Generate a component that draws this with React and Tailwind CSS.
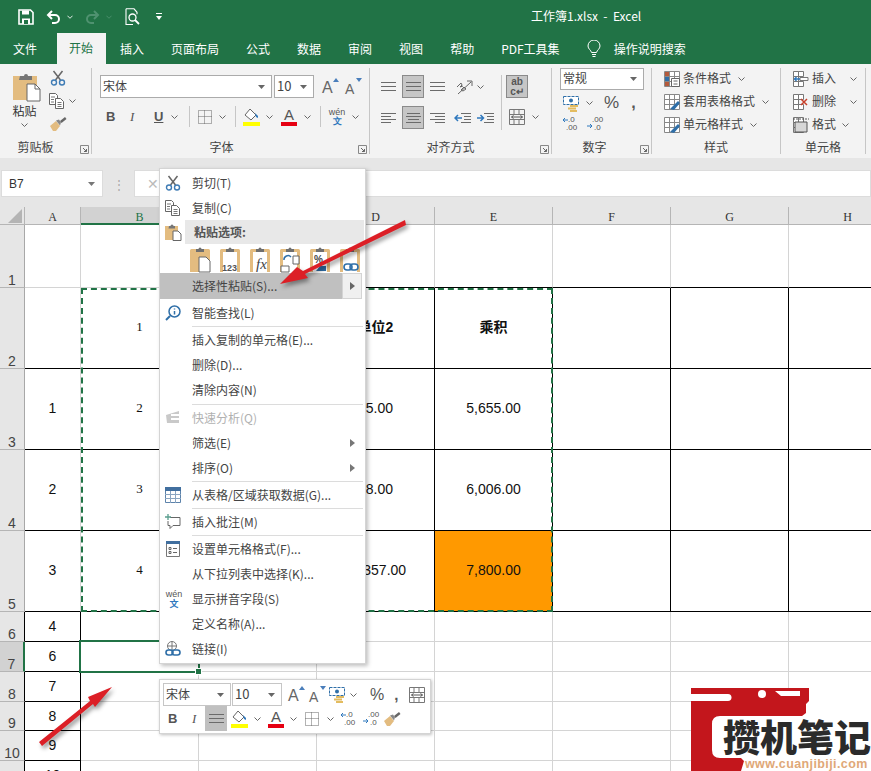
const UI = "font-['Noto_Sans_CJK_SC','Liberation_Sans',sans-serif]";

const Chev = ({ className = "" }) => (
  <svg width="7" height="4" viewBox="0 0 7 4" className={"shrink-0 " + className}>
    <path d="M.5.5l3 3 3-3" fill="none" stroke="#666" />
  </svg>
);

const Launcher = () => (
  <svg width="9" height="9" viewBox="0 0 9 9" className="absolute right-[2px] bottom-[0px]">
    <path d="M.5 8.500v-8h8v8z" fill="none" stroke="#888" />
    <path d="M3 3l3.500 3.500M6.500 4v2.500H4" fill="none" stroke="#666" />
  </svg>
);

const Save = () => (
  <svg width="16" height="16" viewBox="0 0 16 16">
    <path d="M1 1h11.500L15 3.500V15H1z" fill="none" stroke="#fff" strokeWidth="1.600" />
    <path d="M4 1.500h7v4H4zM4 9.500h8V15H4z" fill="#fff" />
    <path d="M6 11h4v4H6z" fill="#217346" />
  </svg>
);

const Undo = ({ color = "#fff" }) => (
  <svg width="15" height="14" viewBox="0 0 15 14">
    <path d="M2 5h7a4 4 0 0 1 0 8H6" fill="none" stroke={color} strokeWidth="2" />
    <path d="M6 1L2 5l4 4" fill="none" stroke={color} strokeWidth="2" />
  </svg>
);

const Preview = () => (
  <svg width="16" height="18" viewBox="0 0 16 18">
    <path d="M1 .8h8l3 3.500v2M1 .8V16.500h7" fill="none" stroke="#fff" strokeWidth="1.100" />
    <circle cx="7.500" cy="9.500" r="3.500" fill="none" stroke="#fff" strokeWidth="1.300" />
    <path d="M10 12l4 4" stroke="#fff" strokeWidth="1.800" />
  </svg>
);

const Bulb = () => (
  <svg width="14" height="19" viewBox="0 0 14 19">
    <path d="M4.500 12.500C4 10 1 9 1 6a6 6 0 0 1 12 0c0 3-3 4-3.500 6.500z" fill="none" stroke="#fff" />
    <path d="M5 14.500h4M5.500 16.500h3" stroke="#fff" />
  </svg>
);

const Clip = ({ w = 20, h = 26, solid = false, children }) => (
  <svg width={w} height={h} viewBox="0 0 20 26" className="overflow-visible">
    <path d="M1.500 3H18.500a1.500 1.500 0 0 1 1.500 1.500V26H0V4.500A1.500 1.500 0 0 1 1.500 3z" fill="#e3bc80" />
    {!solid && <path d="M3 6h14v20H3z" fill="#fff" />}
    <path d="M6 3h2.500a1.500 1.500 0 0 1 3 0H14v3H6z" fill="#6f6f6f" />
    {children}
  </svg>
);

const PasteBig = () => (
  <svg width="29" height="30" viewBox="0 0 29 30">
    <path d="M1 4h24v24H1z" fill="#e3bc80" />
    <path d="M8 4h4a2 2 0 0 1 4 0h4v4H7z" fill="#757575" />
    <path d="M15 12h8l5 5v12H15z" fill="#fff" stroke="#666" />
    <path d="M23 12v5h5" fill="none" stroke="#666" />
  </svg>
);

const PasteSmall = () => (
  <svg width="17" height="18" viewBox="0 0 17 18">
    <path d="M0 3h13v14H0z" fill="#e3bc80" />
    <path d="M4 3h1.500a1.500 1.500 0 0 1 3 0H10v2.500H3.500z" fill="#777" />
    <path d="M8 8h5l3 3v6.500H8z" fill="#fff" stroke="#666" />
  </svg>
);

const Scissors = () => (
  <svg width="16" height="16" viewBox="0 0 16 16">
    <path d="M3.500 1l7 9M12.500 1l-7 9" stroke="#666" strokeWidth="1.500" />
    <circle cx="4" cy="12.500" r="2.500" fill="none" stroke="#3f7cb5" strokeWidth="1.400" />
    <circle cx="12" cy="12.500" r="2.500" fill="none" stroke="#3f7cb5" strokeWidth="1.400" />
  </svg>
);

const Copy = () => (
  <svg width="16" height="16" viewBox="0 0 16 16">
    <path d="M.5.5h6l2 2v9h-8z" fill="#fff" stroke="#666" />
    <path d="M6.500 5.500h5l3 3v7h-8z" fill="#fff" stroke="#666" />
    <path d="M2 4h4M2 6.500h3M2 9h3M8.500 9.500h4M8.500 11.500h4M8.500 13.500h4" stroke="#777" />
  </svg>
);

const Painter = () => (
  <svg width="17" height="15" viewBox="0 0 17 15">
    <path d="M0 10l6-5 4 5-4 5H3z" fill="#e3bc80" />
    <path d="M6 4.500l3-1 2 3-1 3z" fill="#888" />
    <path d="M10 5l5-4 1.500 2-5 4z" fill="#666" />
  </svg>
);

const Lines = ({ kind = "c", w = 15 }) => {
  const rows = {
    t: [15, 15, 15],
    c: [15, 15, 15],
    l: [15, 10, 15, 10],
    m: [13, 15, 11, 15],
    r: [15, 10, 15, 10],
  }[kind];
  return (
    <svg width={w} height="12" viewBox="0 0 15 12">
      {rows.map((len, i) => {
        const x = kind === "r" ? 15 - len : kind === "m" ? (15 - len) / 2 : 0;
        const y = rows.length === 3 ? i * 4 + 1.5 : i * 3 + 1.5;
        return <path key={i} d={`M${x} ${y}h${len}`} stroke="#6b6b6b" />;
      })}
    </svg>
  );
};

const Orient = () => (
  <svg width="18" height="17" viewBox="0 0 18 17" className="overflow-visible">
    <path d="M3 16L16 4M12 3h5v5" fill="none" stroke="#666" />
    <path d="M2 9l4-4 1 2-2 2 3-1M6 12l3-3 2 2-3 2z" fill="none" stroke="#666" />
  </svg>
);

const Indent = ({ flip = false }) => (
  <svg width="17" height="12" viewBox="0 0 17 12">
    <path d="M7 1.500h10M10 4.500h7M10 7.500h7M7 10.500h10" stroke="#6b6b6b" />
    {flip ? <path d="M0 6h6M3.500 3L6.500 6l-3 3" fill="none" stroke="#2f78bd" strokeWidth="1.500" /> : <path d="M1 6h7M4 3L1 6l3 3" fill="none" stroke="#2f78bd" strokeWidth="1.500" />}
  </svg>
);

const Merge = () => (
  <svg width="16" height="16" viewBox="0 0 16 16">
    <path d="M.5.5h15v15H.5zM.5 5.500h15M.5 10.500h15M5 .5v5M10 .5v5M5 10.500v5M10 10.500v5" fill="none" stroke="#777" />
    <path d="M2.500 8h11M2.500 8l2-1.500M2.500 8l2 1.500M13.500 8l-2-1.500M13.500 8l-2 1.500" stroke="#555" />
  </svg>
);

const Wrap = () => (
  <div className="w-[22px] h-[23px] bg-[#c6c6c6] border border-[#8a8a8a] flex flex-col items-center justify-center text-[#555] leading-[10px] font-['Liberation_Sans',sans-serif] text-[10px] font-bold">
    <span>ab</span>
    <span>c↵</span>
  </div>
);

const Accounting = () => (
  <svg width="17" height="17" viewBox="0 0 17 17">
    <path d="M.5 1.500h15v8H.5z" fill="#fff" stroke="#2f6fa8" strokeDasharray="3 1" />
    <circle cx="8" cy="5.500" r="2" fill="#2f6fa8" />
    <path d="M7 10h8v2H7zM5 12.500h8v2H5zM7 15h7v2H7z" fill="#e3bc60" />
  </svg>
);

const Decimal = ({ more = false }) => (
  <svg width="15" height="15" viewBox="0 0 15 15" className="overflow-visible">
    <text x="5" y="6" fontSize="8" fill="#555" fontFamily="Liberation Sans">{more ? ".00" : ".0"}</text>
    <text x={more ? 7 : 3} y="14" fontSize="8" fill="#555" fontFamily="Liberation Sans">{more ? ".0" : ".00"}</text>
    {more ? <path d="M0 10h5M3 8l2 2-2 2" fill="none" stroke="#2f78bd" /> : <path d="M0 4h5M2 2L0 4l2 2" fill="none" stroke="#2f78bd" />}
  </svg>
);

const Borders = () => (
  <svg width="14" height="14" viewBox="0 0 14 14">
    <path d="M.5.5h13v13H.5zM6.500 .5v13M.5 6.500h13" fill="none" stroke="#666" strokeDasharray="1 1" />
  </svg>
);

const Fill = () => (
  <svg width="17" height="18" viewBox="0 0 17 18">
    <path d="M2 7l5-6 6 6-5 5z" fill="#fff" stroke="#666" />
    <path d="M12 5l3 3v2l-2-1z" fill="#2f78bd" />
    <path d="M0 14h17v4H0z" fill="#ffff00" />
  </svg>
);

const FontColor = () => (
  <div className="relative w-[16px] h-[18px] flex flex-col items-center">
    <span className="text-[15px] leading-[14px] font-['Liberation_Sans',sans-serif] text-[#555]">A</span>
    <span className="w-[16px] h-[4px] bg-[#e60012]" />
  </div>
);

const Grow = ({ up = true, size = 16 }) => (
  <div className="relative w-[17px] h-[18px] text-[#666] font-['Liberation_Sans',sans-serif] flex items-end">
    <span className="leading-none" style={{ fontSize: size }}>A</span>
    <svg width="6" height="4" viewBox="0 0 6 4" className="absolute right-0 top-0">
      <path d={up ? "M0 4l3-4 3 4z" : "M0 0l3 4 3-4z"} fill="#4a7ebb" />
    </svg>
  </div>
);

const Wen = () => (
  <div className="flex flex-col items-center w-[18px]">
    <span className="text-[9px] leading-[9px] font-['Liberation_Sans',sans-serif] text-[#555]">wén</span>
    <span className="text-[9px] leading-[9px] text-[#2f78bd] font-bold">文</span>
  </div>
);

const StyleIcon = ({ cond = false }) => (
  <svg width="16" height="16" viewBox="0 0 16 16">
    <path d="M.5.5h15v15H.5zM.5 5.500h15M.5 10.500h15M5.500.5v15M10.500.5v15" fill="#fff" stroke="#888" />
    {cond ? <path d="M1 1h4v4H1zM1 11h4v4H1z" fill="#b45a3c" /> : <path d="M6 15l8-8 2 2-6 7z" fill="#2f6fa8" />}
    {cond && <path d="M1 6h4v4H1z" fill="#2f6fa8" />}
    {cond && <path d="M7.500 7.500h8v8h-8z M9.500 10h4M9.500 13h4" fill="#fff" stroke="#666" />}
  </svg>
);

const CellsIcon = ({ kind }) => (
  <svg width="16" height="16" viewBox="0 0 16 16">
    <path d="M.5.5h5v5h-5zM.5 5.500h5v5h-5zM.5 10.500h5v5h-5zM5.500.5h5v5h-5zM5.500 10.500h5v5h-5z" fill="#fff" stroke="#777" />
    {kind === "add" && <path d="M7 6.500h8v3H7z" fill="#fff" stroke="#777" />}
    {kind === "add" && <path d="M1 8h6M3.500 6L1.500 8l2 2" fill="none" stroke="#2f78bd" strokeWidth="1.300" />}
    {kind === "del" && <path d="M8 5l6 6M14 5l-6 6" stroke="#c8402a" strokeWidth="1.500" />}
    {kind === "fmt" && <path d="M2 5h12v10H2z" fill="#d7d7d7" stroke="#555" />}
    {kind === "fmt" && <path d="M0 2h16" stroke="#555" strokeDasharray="2 1" />}
  </svg>
);

const Group = ({ width, launcher, label, labelClass = "", children }) => (
  <div className={"relative shrink-0 h-[86px] border-r border-[#c6c6c6] " + width}>
    {children}
    <div className={"absolute left-0 right-0 bottom-0 h-[14px] text-center text-[12px] leading-[14px] text-[#444] " + labelClass}>{label}</div>
    {launcher && <Launcher />}
  </div>
);

const Combo = ({ className, text, textClass = "" }) => (
  <div className={"flex items-center justify-between bg-white border border-[#ababab] pl-[2px] pr-[6px] text-[12px] text-[#444] " + className}>
    <span className={"pb-[2px] " + textClass}>{text}</span>
    <svg width="7" height="4" viewBox="0 0 7 4"><path d="M0 0h7L3.500 4z" fill="#666" /></svg>
  </div>
);

const AlignGroup = () => (
  <div className="flex pl-[11px] pt-[7px]">
    <div className="flex flex-col gap-[8px] w-[120px]">
      <div className="flex items-center h-[23px]">
        <Lines kind="t" />
        <div className="ml-[6px] w-[22px] h-[23px] bg-[#c6c6c6] border border-[#8a8a8a] flex items-center justify-center"><Lines kind="c" /></div>
        <div className="ml-[6px]"><Lines kind="t" /></div>
        <div className="ml-[10px]"><Orient /></div>
        <Chev className="ml-[4px]" />
      </div>
      <div className="flex items-center h-[23px]">
        <Lines kind="l" />
        <div className="ml-[6px] w-[22px] h-[23px] bg-[#c6c6c6] border border-[#8a8a8a] flex items-center justify-center"><Lines kind="m" /></div>
        <div className="ml-[6px]"><Lines kind="r" /></div>
        <div className="ml-[9px]"><Indent /></div>
        <div className="ml-[6px]"><Indent flip /></div>
      </div>
    </div>
    <div className="w-px h-[55px] bg-[#c6c6c6]" />
    <div className="flex flex-col gap-[11px] pl-[4px]">
      <Wrap />
      <div className="flex items-center gap-[7px] pl-[3px]"><Merge /><Chev /></div>
    </div>
  </div>
);

const FontRowTwo = () => (
  <div className="flex items-center h-[23px] pl-[14px] text-[13px] text-[#555] font-['Liberation_Sans',sans-serif]">
    <span className="w-[24px] font-bold">B</span>
    <span className="w-[24px] italic font-['Liberation_Serif',serif]">I</span>
    <span className="w-[17px] underline font-bold">U</span>
    <Chev />
    <div className="w-px h-[21px] bg-[#c6c6c6] ml-[11px] mr-[8px]" />
    <Borders />
    <Chev className="ml-[7px]" />
    <div className="w-px h-[21px] bg-[#c6c6c6] ml-[9px] mr-[7px]" />
    <Fill />
    <Chev className="ml-[6px]" />
    <div className="w-[8px]" />
    <FontColor />
    <Chev className="ml-[7px]" />
    <div className="w-px h-[21px] bg-[#c6c6c6] ml-[9px] mr-[7px]" />
    <Wen />
    <Chev className="ml-[6px]" />
  </div>
);

const Ribbon = () => (
  <div className="flex h-[94px] bg-[#f3f3f3] pt-[4px] text-[#444]">
    <Group width="w-[92px]" label="剪贴板" labelClass="pr-[20px]" launcher>
      <div className="flex">
        <div className="w-[50px] pl-[12px] pt-[4px] flex flex-col items-start">
          <PasteBig />
          <div className="text-[12px] leading-[16px] mt-[1px] w-[25px] text-center text-[#333]">粘贴</div>
          <Chev className="mt-[4px] ml-[9px]" />
        </div>
        <div className="flex flex-col pt-[2px]">
          <Scissors />
          <div className="flex items-center mt-[7px] -ml-[1px] gap-[4px]"><Copy /><Chev /></div>
          <div className="mt-[7px]"><Painter /></div>
        </div>
      </div>
    </Group>
    <Group width="w-[278px]" label="字体" labelClass="pr-[18px]" launcher>
      <div className="pt-[7px]">
        <div className="flex items-center h-[23px] pl-[8px]">
          <Combo className="w-[172px] h-[23px]" text="宋体" />
          <Combo className="ml-[2px] w-[40px] h-[23px]" text="10" textClass="text-[13px]" />
          <div className="ml-[8px]"><Grow /></div>
          <div className="ml-[6px]"><Grow up={false} size={14} /></div>
        </div>
        <div className="mt-[7px]"><FontRowTwo /></div>
      </div>
    </Group>
    <Group width="w-[182px]" label="对齐方式" labelClass="pr-[20px]" launcher>
      <AlignGroup />
    </Group>
    <Group width="w-[100px]" label="数字" labelClass="pr-[14px]" launcher>
      <div className="pl-[8px]">
        <Combo className="w-[84px] h-[22px]" text="常规" />
        <div className="flex items-center h-[24px] pl-[3px] mt-[1px]">
          <Accounting />
          <Chev className="ml-[6px]" />
          <span className="ml-[11px] text-[17px] text-[#555] font-['Liberation_Sans',sans-serif]">%</span>
          <span className="ml-[12px] text-[16px] font-bold text-[#555] font-['Liberation_Sans',sans-serif]">,</span>
        </div>
        <div className="flex items-center gap-[9px] pl-[3px] mt-[1px]">
          <Decimal />
          <Decimal more />
        </div>
      </div>
    </Group>
    <Group width="w-[129px]" label="样式">
      <div className="pl-[12px] -mt-[1px] flex flex-col text-[12px]">
        <div className="flex items-center h-[23px] gap-[3px]"><StyleIcon cond /><span className="pb-[2px]">条件格式</span><Chev className="ml-[4px]" /></div>
        <div className="flex items-center h-[23px] gap-[3px]"><StyleIcon /><span className="pb-[2px]">套用表格格式</span><Chev className="ml-[4px]" /></div>
        <div className="flex items-center h-[23px] gap-[3px]"><StyleIcon /><span className="pb-[2px]">单元格样式</span><Chev className="ml-[4px]" /></div>
      </div>
    </Group>
    <Group width="w-[85px]" label="单元格">
      <div className="pl-[12px] -mt-[1px] flex flex-col text-[12px]">
        <div className="flex items-center h-[23px]"><CellsIcon kind="add" /><span className="ml-[3px] pb-[2px]">插入</span><Chev className="ml-[14px]" /></div>
        <div className="flex items-center h-[23px]"><CellsIcon kind="del" /><span className="ml-[3px] pb-[2px]">删除</span><Chev className="ml-[14px]" /></div>
        <div className="flex items-center h-[23px]"><CellsIcon kind="fmt" /><span className="ml-[3px] pb-[2px]">格式</span><Chev className="ml-[6px]" /></div>
      </div>
    </Group>
  </div>
);

const colKeys = ["A", "B", "C", "D", "E", "F", "G", "H"];

const rows = [
  { n: 1, h: "h-[63px]" },
  { n: 2, h: "h-[81px]", B: "1", D: "单位2", E: "乘积" },
  { n: 3, h: "h-[81px]", A: "1", B: "2", D: "85.00", E: "5,655.00" },
  { n: 4, h: "h-[81px]", A: "2", B: "3", D: "98.00", E: "6,006.00" },
  { n: 5, h: "h-[81px]", A: "3", B: "4", D: "11,357.00", E: "7,800.00" },
  { n: 6, h: "h-[30px]", A: "4" },
  { n: 7, h: "h-[30px]", A: "6" },
  { n: 8, h: "h-[30px]", A: "7" },
  { n: 9, h: "h-[29px]", A: "8" },
  { n: 10, h: "h-[30px]", A: "9" },
  { n: 11, h: "h-[30px]", A: "10" },
];

const cellBorder = (n, col) => {
  const i = colKeys.indexOf(col);
  const bottomBlack = (n === 1 && i >= 2) || (n >= 2 && n <= 5) || (n >= 6 && i === 0);
  const rightBlack = (n >= 6 && i === 0) || (n >= 2 && n <= 5 && i >= 1);
  return (bottomBlack ? "border-b-black " : "border-b-[#d4d4d4] ") + (rightBlack ? "border-r-black" : "border-r-[#d4d4d4]");
};

const rowHeadClass = (n) => {
  if (n === 7) return " bg-[#d2d2d2] border-r-2 border-r-[#217346]";
  if (n >= 6) return " bg-[#e6e6e6] border-r-black";
  return " bg-[#e6e6e6] border-r-[#a8a8a8]";
};

const Sheet = () => (
  <div className="grid grid-cols-[25px_56px_repeat(7,118px)] w-[871px] overflow-hidden bg-white">
    <div className="h-[18px] bg-[#e6e6e6] border-r border-b border-[#b5b5b5] relative">
      <svg width="14" height="14" viewBox="0 0 14 14" className="absolute right-[2px] bottom-[1px]"><path d="M14 0v14H0z" fill="#b4b4b4" /></svg>
    </div>
    {colKeys.map((c) => (
      <div key={c} className={"h-[18px] flex items-center justify-center pt-[3px] text-[12px] font-['Liberation_Serif',serif] border-r " + (c === "B" ? "bg-[#d2d2d2] border-b-2 border-b-[#217346] border-r-[#b5b5b5] text-[#217346]" : "bg-[#e6e6e6] border-b border-[#b5b5b5] text-[#333]")}>{c}</div>
    ))}
    {rows.map((r) => [
      <div key={"h" + r.n} className={"flex items-end justify-center pb-[1px] text-[14px] leading-[12px] font-['Liberation_Sans',sans-serif] text-[#444] border-b border-b-[#b5b5b5] border-r " + r.h + rowHeadClass(r.n)}>{r.n}</div>,
      ...colKeys.map((c) => (
        <div key={r.n + c} className={"flex items-center justify-center border-r border-b text-[#111] " + r.h + " " + cellBorder(r.n, c) + (c === "B" ? " text-[13px] font-['Liberation_Serif',serif]" : " text-[14px] font-['Liberation_Sans','Noto_Sans_CJK_SC',sans-serif]") + (r.n === 2 ? " font-bold" : "") + (r.n <= 5 ? " pb-[2px]" : "") + (r.n === 5 && c === "E" ? " bg-[#ff9900]" : "")}>
          <span className={r.n === 2 && c === "B" ? "font-normal" : ""}>{r[c]}</span>
        </div>
      )),
    ])}
  </div>
);

const Item = ({ icon, text, sub, disabled }) => (
  <div className={"flex items-center h-[25px] text-[12px] " + (disabled ? "text-[#b1b1b1]" : "text-[#444]")}>
    <div className="w-[32px] h-full flex items-center justify-start shrink-0 pl-[5px]">{icon}</div>
    <span className="flex-1">{text}</span>
    {sub && <svg width="5" height="8" viewBox="0 0 5 8" className="mr-[10px]"><path d="M0 0l5 4-5 4z" fill="#777" /></svg>}
  </div>
);

const Sep = () => <div className="h-[2px] ml-[32px] mr-[2px] border-b border-[#dcdcdc]" />;

const PasteChoice = ({ solid, children }) => (
  <div className="w-[30px] shrink-0"><Clip solid={solid}>{children}</Clip></div>
);

const MenuIcon = ({ kind }) => (
  <svg width="16" height="16" viewBox="0 0 16 16">
    {kind === "search" && (
      <g>
        <circle cx="9.500" cy="6.500" r="5.500" fill="#fff" stroke="#2f6fa8" strokeWidth="1.500" />
        <path d="M9.500 3.500v1M9.500 6v3.500" stroke="#2f6fa8" strokeWidth="1.500" />
        <path d="M5 11l-4 4" stroke="#2f6fa8" strokeWidth="2" />
      </g>
    )}
    {kind === "quick" && <path d="M1 5l13-4v3H6v2h8v2H6v2h8v3H2z" fill="#c9c9c9" />}
    {kind === "table" && (
      <g>
        <path d="M.5.5h15v15H.5z" fill="#fff" stroke="#5d83ab" />
        <path d="M0 0h16v4H0z" fill="#416f9f" />
        <path d="M5.500 4v12M10.500 4v12M0 7.500h16M0 11.500h16" stroke="#8aa5c1" />
      </g>
    )}
    {kind === "note" && (
      <g>
        <path d="M5 3.500h10v8H8l-3 3v-3H3V7" fill="none" stroke="#666" />
        <path d="M3 0v6M0 3h6" stroke="#5a9e8e" strokeWidth="1.300" />
      </g>
    )}
    {kind === "format" && (
      <g>
        <path d="M1.500.5h13v15h-13z" fill="#fff" stroke="#777" />
        <path d="M1 0h14v3H1z" fill="#416f9f" />
        <path d="M4 6.500h2v2H4zM4 10.500h2v2H4zM8 7.500h4M8 11.500h4" fill="none" stroke="#666" />
      </g>
    )}
    {kind === "link" && (
      <g>
        <circle cx="7" cy="5" r="4.500" fill="none" stroke="#777" />
        <path d="M2.500 5h9M7 .5v9" stroke="#777" />
        <rect x="1" y="9" width="7" height="5" rx="2.500" fill="none" stroke="#2f6fa8" strokeWidth="1.600" />
        <rect x="7" y="9" width="8" height="5" rx="2.500" fill="none" stroke="#2f6fa8" strokeWidth="1.600" />
      </g>
    )}
  </svg>
);

const ContextMenu = () => (
  <div className="absolute left-[159px] top-[168px] w-[207px] h-[496px] bg-white border border-[#d4d4d4] shadow-[2px_2px_4px_rgba(0,0,0,0.25)] pt-[1px] flex flex-col">
    <Item icon={<Scissors />} text="剪切(T)" />
    <Item icon={<Copy />} text="复制(C)" />
    <div className="flex h-[24px] items-center">
      <div className="w-[24px] h-full flex items-center justify-center shrink-0 ml-[1px]"><PasteSmall /></div>
      <div className="w-[179px] h-full bg-[#e8e8e8] flex items-center pl-[9px] text-[12px] font-bold text-[#555]">粘贴选项:</div>
    </div>
    <div className="flex items-center h-[29px] pl-[30px]">
      <PasteChoice solid><path d="M9 11h7l4 4v11H9z" fill="#fff" stroke="#666" /></PasteChoice>
      <PasteChoice><text x="2" y="25" fontSize="9" fontWeight="bold" fill="#555" fontFamily="Liberation Sans">123</text></PasteChoice>
      <PasteChoice><text x="6" y="23" fontSize="15" fontStyle="italic" fill="#444" fontFamily="Liberation Serif">fx</text></PasteChoice>
      <PasteChoice>
        <path d="M4 14a4 4 0 0 1 7-3" fill="none" stroke="#2f6fa8" strokeWidth="1.500" />
        <path d="M13 10h6v8h-6zM1 20h8v6H1z" fill="#fff" stroke="#666" />
      </PasteChoice>
      <PasteChoice><text x="4" y="17" fontSize="10" fontWeight="bold" fill="#444" fontFamily="Liberation Sans">%</text><path d="M6 25l4-5h6v5z" fill="#2f6fa8" /></PasteChoice>
      <PasteChoice><rect x="4" y="18" width="8" height="6" rx="3" fill="none" stroke="#2f6fa8" strokeWidth="1.600" /><rect x="10" y="18" width="8" height="6" rx="3" fill="none" stroke="#2f6fa8" strokeWidth="1.600" /></PasteChoice>
    </div>
    <div className="flex h-[26px] text-[12px] text-[#444]">
      <div className="w-[182px] h-full bg-[#c0c0c0] flex items-center pl-[32px]">选择性粘贴(S)...</div>
      <div className="w-[20px] h-full bg-[#f0f0f0] border border-[#d4d4d4] flex items-center justify-center">
        <svg width="5" height="8" viewBox="0 0 5 8"><path d="M0 0l5 4-5 4z" fill="#666" /></svg>
      </div>
    </div>
    <div className="h-[1px]" />
    <Item icon={<MenuIcon kind="search" />} text="智能查找(L)" />
    <Sep />
    <Item text="插入复制的单元格(E)..." />
    <Item text="删除(D)..." />
    <Item text="清除内容(N)" />
    <div className="h-[3px] ml-[32px] mr-[2px] border-b border-[#dcdcdc]" />
    <Item icon={<MenuIcon kind="quick" />} text="快速分析(Q)" disabled />
    <Item text="筛选(E)" sub />
    <Item text="排序(O)" sub />
    <Sep />
    <Item icon={<MenuIcon kind="table" />} text="从表格/区域获取数据(G)..." />
    <Sep />
    <Item icon={<MenuIcon kind="note" />} text="插入批注(M)" />
    <Sep />
    <Item icon={<MenuIcon kind="format" />} text="设置单元格格式(F)..." />
    <Item text="从下拉列表中选择(K)..." />
    <Item icon={<Wen />} text="显示拼音字段(S)" />
    <Item text="定义名称(A)..." />
    <Item icon={<MenuIcon kind="link" />} text="链接(I)" />
  </div>
);

const MiniToolbar = () => (
  <div className="absolute left-[159px] top-[679px] w-[272px] h-[55px] bg-white border border-[#d4d4d4] shadow-[1px_1px_3px_rgba(0,0,0,0.25)] px-[3px] pt-[3px] text-[#555] flex flex-col">
    <div className="flex items-center h-[23px]">
      <Combo className="w-[68px] h-[23px] border-[#c6c6c6]" text="宋体" />
      <Combo className="w-[50px] h-[23px] ml-px border-[#c6c6c6]" text="10" textClass="text-[13px]" />
      <div className="ml-[6px]"><Grow /></div>
      <div className="ml-[4px]"><Grow up={false} size={14} /></div>
      <div className="ml-[3px]"><Accounting /></div>
      <Chev className="ml-[4px]" />
      <span className="ml-[13px] text-[16px] font-['Liberation_Sans',sans-serif]">%</span>
      <span className="ml-[10px] text-[15px] font-bold font-['Liberation_Sans',sans-serif] leading-none">,</span>
      <div className="ml-[11px]"><Merge /></div>
    </div>
    <div className="flex items-center h-[25px] text-[13px] font-['Liberation_Sans',sans-serif]">
      <span className="ml-[5px] font-bold w-[24px]">B</span>
      <span className="italic font-['Liberation_Serif',serif] w-[13px]">I</span>
      <div className="w-[22px] h-[25px] bg-[#c0c0c0] flex items-center justify-center"><Lines kind="c" /></div>
      <div className="ml-[4px]"><Fill /></div>
      <Chev className="ml-[6px]" />
      <div className="ml-[7px]"><FontColor /></div>
      <Chev className="ml-[6px]" />
      <div className="ml-[8px]"><Borders /></div>
      <Chev className="ml-[8px]" />
      <div className="ml-[7px]"><Decimal /></div>
      <div className="ml-[7px]"><Decimal more /></div>
      <div className="ml-[6px]"><Painter /></div>
    </div>
  </div>
);

const Arrow = ({ d, className, width, height }) => (
  <svg width={width} height={height} className={"absolute drop-shadow-[2px_3px_2px_rgba(0,0,0,0.4)] " + className}>
    <path d={d} fill="#dc1f26" />
  </svg>
);

const Logo = () => (
  <div className="absolute left-[691px] top-[688px] w-[180px] h-[83px] bg-white overflow-hidden">
    <svg width="180" height="83" viewBox="0 0 180 83" className="absolute inset-0">
      <path d="M0 0h118v13l-3 3v9l-4 3H29q-8 0-8 8v26q0 8 8 8h21l3 3-3 10H0z" fill="#c3161c" />
      <path d="M0 6h37a3 3 0 0 1 0 7H0z" fill="#fff" />
      <circle cx="71" cy="6" r="4" fill="#fff" />
      <path d="M84 3h25v5H90z" fill="#fff" />
    </svg>
    <div className="absolute left-[32px] top-[30px] text-[37px] leading-[37px] font-black text-[#2b2b2b] whitespace-nowrap">攒机笔记</div>
    <div className="absolute left-[54px] top-[69px] text-[12.500px] leading-[14px] font-bold tracking-[0.4px] text-[#e0a878] font-['Liberation_Sans',sans-serif] whitespace-nowrap">www.cuanjibiji.com</div>
  </div>
);

const App = () => (
  <div className={"relative w-[871px] h-[771px] overflow-hidden bg-[#e6e6e6] " + UI}>
    <div className="flex items-center h-[33px] bg-[#217346] text-white">
      <div className="flex items-center w-[531px] pl-[18px]">
        <Save />
        <div className="ml-[12px]"><Undo /></div>
        <svg width="6" height="4" viewBox="0 0 7 4" className="ml-[6px]"><path d="M.5.5l3 3 3-3" fill="none" stroke="#fff" /></svg>
        <div className="ml-[12px] scale-x-[-1]"><Undo color="#4f9270" /></div>
        <svg width="6" height="4" viewBox="0 0 7 4" className="ml-[6px]"><path d="M.5.5l3 3 3-3" fill="none" stroke="#4f9270" /></svg>
        <div className="ml-[13px]"><Preview /></div>
        <svg width="6" height="7" viewBox="0 0 6 7" className="ml-[15px]"><path d="M0 0h6v1H0zM0 3h6L3 7z" fill="#fff" /></svg>
      </div>
      <span className="text-[12px] pb-[1px]">工作簿1.xlsx&nbsp; -&nbsp; Excel</span>
    </div>
    <div className="flex items-end h-[31px] bg-[#217346] text-white text-[12px] leading-[30px]">
      <span className="px-[13px]">文件</span>
      <span className="ml-[7px] pl-[12px] pr-[13px] h-[31px] bg-[#f3f3f3] text-[#217346]">开始</span>
      <div className="flex gap-px ml-px">
        <span className="px-[13px]">插入</span>
        <span className="px-[13px]">页面布局</span>
        <span className="px-[13px]">公式</span>
        <span className="px-[13px]">数据</span>
        <span className="px-[13px]">审阅</span>
        <span className="px-[13px]">视图</span>
        <span className="px-[13px]">帮助</span>
        <span className="px-[13px]">PDF工具集</span>
      </div>
      <div className="ml-[14px] h-[30px] flex items-center"><Bulb /></div>
      <span className="ml-[13px]">操作说明搜索</span>
    </div>
    <Ribbon />
    <div className="h-[12px]" />
    <div className="flex items-center h-[27px]">
      <div className="ml-[1px] w-[102px] h-[27px] bg-white border border-[#dcdcdc] flex items-center justify-between pl-[7px] pr-[7px] text-[12px] text-[#333] font-['Liberation_Sans',sans-serif]">
        <span>B7</span>
        <svg width="7" height="4" viewBox="0 0 7 4"><path d="M0 0h7L3.500 4z" fill="#777" /></svg>
      </div>
      <div className="w-[31px] text-center text-[#aaa] text-[12px] leading-none">⋮</div>
      <div className="flex-1 h-[27px] bg-white border border-[#dcdcdc] pl-[12px] flex items-center text-[#bbb] text-[14px]">✕</div>
    </div>
    <div className="h-[10px]" />
    <Sheet />

    <div className="absolute left-[81px] top-[288px] w-[472px] h-[324px] border-2 border-dashed border-[#217346]" />
    <div className="absolute left-[79px] top-[640px] w-[121px] h-[33px] border-2 border-[#217346]" />
    <div className="absolute left-[196px] top-[669px] w-[5px] h-[5px] bg-[#217346] outline outline-white" />

    <ContextMenu />
    <MiniToolbar />
    <Arrow width={140} height={75} className="left-[272px] top-[218px]" d="M133 2L31 53l-6-4L8 66l28-6-3-4L134 7z" />
    <Arrow width={85} height={70} className="left-[35px] top-[682px]" d="M4 60L55 19l-2-4L77 5 60 25l-2-3L7 64z" />
    <Logo />
  </div>
);

export default App;
